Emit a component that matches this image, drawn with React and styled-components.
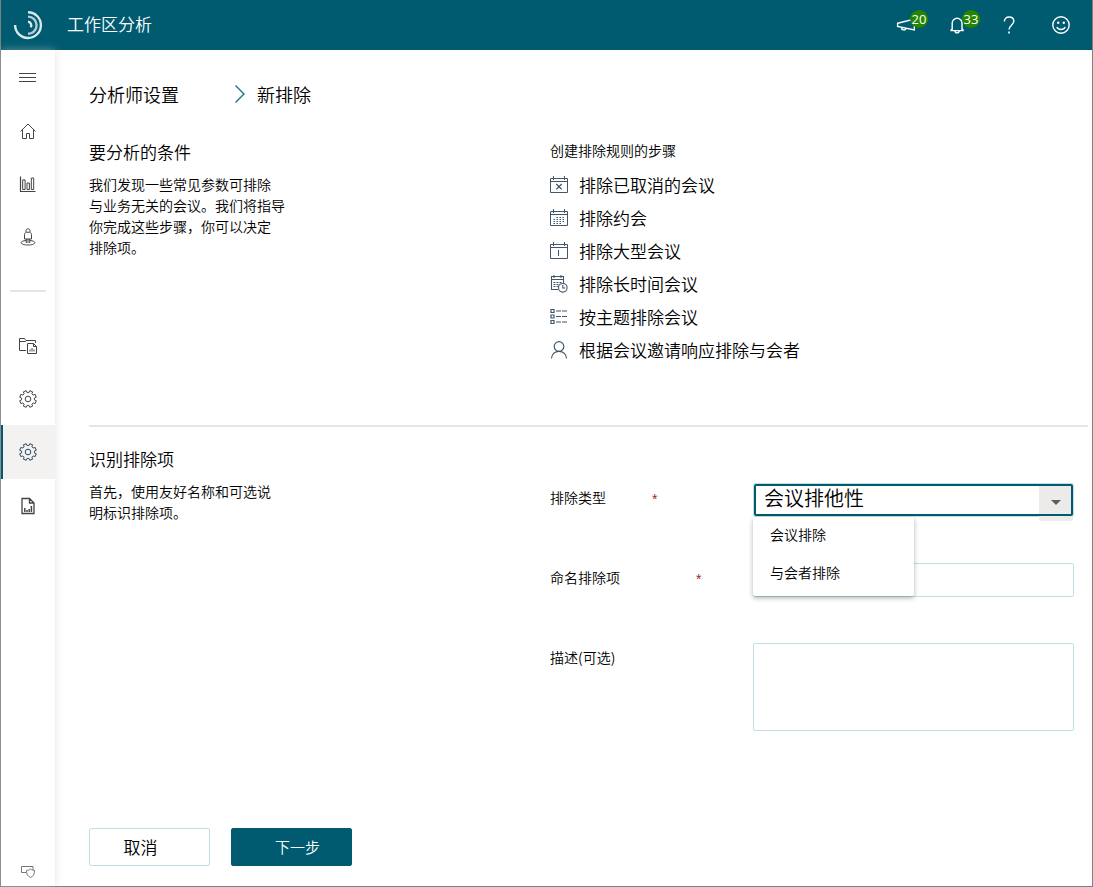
import React from "react";
import styled, { createGlobalStyle } from "styled-components";

const GlobalStyle = createGlobalStyle`
  *, *::before, *::after {
    box-sizing: border-box;
  }

  body {
    margin: 0;
    color: #000;
    background: #fff;
    font-family: "Noto Sans CJK SC", "Noto Sans", sans-serif;
    font-weight: 350;
  }

  button, input, select, textarea {
    font: inherit;
    color: inherit;
  }

  h1, h2, h3, p, ul, ol {
    margin: 0;
    padding: 0;
    font-weight: inherit;
    list-style: none;
  }
`;

const Icon = ({ size = 18, children, ...rest }) => (
  <svg
    width={size}
    height={size}
    viewBox={`0 0 ${size} ${size}`}
    fill="none"
    stroke="currentColor"
    strokeWidth="1"
    aria-hidden="true"
    {...rest}
  >
    {children}
  </svg>
);

const LogoIcon = () => (
  <Icon size={30} strokeWidth="2.4">
    <path d="M15 2.2A12.9 12.9 0 1 1 2.1 15" opacity="0.85" />
    <path d="M15 6.6A8.6 8.6 0 0 1 15 23.8" opacity="0.7" />
    <path d="M15 11.8A3.4 3.4 0 0 1 17.6 17.2" opacity="0.85" />
  </Icon>
);

const MegaphoneIcon = () => (
  <Icon size={20} strokeWidth="1.4">
    <path d="M2.6 8.2L19.4 4v11L2.6 11.4zM6.4 12.4c0 2.8 4 3.6 4.8 1" />
  </Icon>
);

const BellIcon = () => (
  <Icon size={20} strokeWidth="1.4">
    <path d="M3.6 15.6h13M5.2 15.2V8.2a4.9 4.9 0 0 1 9.8 0v7M3.6 15.6l1.6-2M16.6 15.6l-1.6-2M8 15.8a2.1 2.1 0 0 0 4.2 0" />
  </Icon>
);

const HelpIcon = () => (
  <Icon size={20} strokeWidth="1.4">
    <path d="M5.4 6.6C5.4 3.6 7.4 2 10 2s4.8 1.5 4.8 4.3c0 3.6-4.8 4.2-4.8 8.2" />
    <path d="M10 16.6v2" strokeWidth="1.6" />
  </Icon>
);

const SmileIcon = () => (
  <Icon size={20} strokeWidth="1.4">
    <circle cx="10" cy="10" r="8.2" />
    <path d="M5.8 12c1.6 3.4 6.8 3.4 8.4 0" />
    <circle cx="7.2" cy="7.8" r="1.2" fill="currentColor" stroke="none" />
    <circle cx="12.8" cy="7.8" r="1.2" fill="currentColor" stroke="none" />
  </Icon>
);

const MenuIcon = () => (
  <Icon>
    <path d="M0 4.5h17M0 8.5h17M0 12.5h17" />
  </Icon>
);

const HomeIcon = () => (
  <Icon>
    <path d="M1.5 9.4L9 2l7.5 7.4M3.5 8v8.5h4v-5h3v5h4V8" />
  </Icon>
);

const ChartIcon = () => (
  <Icon>
    <path d="M1.5 1.5v15h15" strokeWidth="1.2" />
    <path d="M3.7 4.9h2.4v9.6H3.7zM8 8h2.4v6.5H8zM12.3 3h2.4v11.5h-2.4z" />
  </Icon>
);

const PersonStandIcon = () => (
  <Icon>
    <path d="M7 4V2.6C7 .3 11 .3 11 2.6V4" />
    <path d="M5.5 11V6.5C5.5 5 6.500 4.2 9 4.2s3.500.8 3.500 2.300V11zM7.300 11v4M9 11v4M10.700 11v4" />
    <path d="M7 12.500c-3 .3-4.800 1.100-4.800 2.200 0 1.400 3 2.300 6.800 2.300s6.800-.9 6.800-2.300c0-1.100-1.800-1.900-4.800-2.200" />
  </Icon>
);

const FolderReportIcon = () => (
  <Icon>
    <path d="M7 13.5H.5v-12h5L7 3.5h9.5V6M.5 4.5h6l1-1" />
    <path d="M8.5 6.5h6l3 3v7h-9zM14.5 6.5v3h3M11 12.5v2M13 11v3.500M15 12.500v2" />
  </Icon>
);

// eight toothed cog, drawn as points round the centre
const cogPath = (() => {
  const points = [];
  for (let i = 0; i < 8; i++) {
    const mid = ((i + 0.5) * Math.PI) / 4;
    [
      [-0.25, 6.5],
      [-0.18, 8.5],
      [0.18, 8.5],
      [0.25, 6.5],
    ].forEach(([angle, r]) => {
      const x = 9 + r * Math.cos(mid + angle);
      const y = 9 + r * Math.sin(mid + angle);
      points.push(`${x.toFixed(2)} ${y.toFixed(2)}`);
    });
  }
  return `M${points.join("L")}z`;
})();

const GearIcon = () => (
  <Icon strokeLinejoin="round">
    <path d={cogPath} />
    <circle cx="9" cy="9" r="2.8" />
  </Icon>
);

const ReportIcon = () => (
  <Icon>
    <path d="M3 1.5h7.5L15 6v10.5H3zM10.5 1.5V6H15" strokeWidth="1.3" />
    <path d="M5.8 11v4M8 13v2M10.2 12v3M12.4 9v6" strokeWidth="1.5" />
  </Icon>
);

const PrivacyIcon = () => (
  <Icon>
    <path d="M7 9.5H2.5v-6H14V7" />
    <path d="M11.5 6c1 1 2.2 1.3 4 1.3 0 4-1 5.7-4 7.2-3-1.5-4-3.2-4-7.2 1.8 0 3-.3 4-1.3z" />
  </Icon>
);

const calendarFrame = "M.5 2.5h17v14H.5zM.5 5.5h17M3.5 0v4M14.5 0v4";

const CalendarCancelIcon = () => (
  <Icon>
    <path d={calendarFrame} />
    <path d="M6.3 8l5.4 5.4M11.7 8l-5.4 5.4" strokeWidth="1.3" />
  </Icon>
);

const CalendarIcon = () => (
  <Icon>
    <path d={calendarFrame} />
    <path d="M3.5 12.5H5M6.5 12.5H8M9.5 12.5H11M12.5 12.5H14M3.5 14.5H5M6.5 14.5H8M9.5 14.5H11M6.5 8.5H8M9.5 8.5H11M12.5 8.5H14M3.5 10.5H5M6.5 10.5H8M9.5 10.5H11M12.5 10.5H14" />
  </Icon>
);

const CalendarDayIcon = () => (
  <Icon>
    <path d={calendarFrame} />
    <path d="M8.5 8v6" />
  </Icon>
);

const CalendarClockIcon = () => (
  <Icon strokeWidth="1.1">
    <path d="M8 14.5H1.5v-13h12V8M1.5 4.5h12M4 0v3M11 0v3" />
    <path d="M3.5 7.5h2M6.5 7.5h2M9.5 7.5h2M3.5 9.5h2M6.5 9.5h2M3.5 11.5h2M6.5 11.5H8" />
    <circle cx="12.8" cy="12.8" r="4.3" />
    <path d="M12.8 10v3h2.5" />
  </Icon>
);

const ListIcon = () => (
  <Icon strokeWidth="1.2">
    <path d="M1 1.5h3v3H1zM1 7h3v3H1zM1 12.5h3v3H1z" />
    <path d="M6 3h5M12 3h5M6 8.5h5M12 8.5h5M6 14h5M12 14h5" />
  </Icon>
);

const PersonIcon = () => (
  <Icon strokeWidth="1.2">
    <circle cx="9" cy="5.5" r="4.8" />
    <path d="M1.5 17.5c.3-4.5 3.5-7.2 7.5-7.2s7.2 2.700 7.500 7.200" />
  </Icon>
);

const navItems = [
  { label: "菜单", icon: <MenuIcon /> },
  { label: "主页", icon: <HomeIcon /> },
  { label: "分析", icon: <ChartIcon /> },
  { label: "人员", icon: <PersonStandIcon /> },
  { divider: true },
  { label: "报表文件夹", icon: <FolderReportIcon /> },
  { label: "设置", icon: <GearIcon /> },
  { label: "分析师设置", icon: <GearIcon />, active: true },
  { label: "报表", icon: <ReportIcon /> },
];

const steps = [
  { text: "排除已取消的会议", icon: <CalendarCancelIcon /> },
  { text: "排除约会", icon: <CalendarIcon /> },
  { text: "排除大型会议", icon: <CalendarDayIcon /> },
  { text: "排除长时间会议", icon: <CalendarClockIcon /> },
  { text: "按主题排除会议", icon: <ListIcon /> },
  { text: "根据会议邀请响应排除与会者", icon: <PersonIcon /> },
];

const App = () => {
  return (
    <Page>
      <GlobalStyle />
      <Header>
        <LogoIcon />
        <AppName>工作区分析</AppName>
        <HeaderActions>
          <HeaderButton aria-label="公告">
            <MegaphoneIcon />
            <Badge>20</Badge>
          </HeaderButton>
          <HeaderButton aria-label="通知">
            <BellIcon />
            <Badge>33</Badge>
          </HeaderButton>
          <HeaderButton aria-label="帮助">
            <HelpIcon />
          </HeaderButton>
          <HeaderButton aria-label="反馈">
            <SmileIcon />
          </HeaderButton>
        </HeaderActions>
      </Header>
      <Body>
        <Sidebar>
          {navItems.map((item, index) =>
            item.divider ? (
              <NavDivider key={index} />
            ) : (
              <NavButton key={index} aria-label={item.label} $active={item.active}>
                {item.icon}
              </NavButton>
            )
          )}
          <PrivacyButton aria-label="隐私">
            <PrivacyIcon />
          </PrivacyButton>
        </Sidebar>
        <Main>
          <Breadcrumb>
            <Crumb href="#settings">分析师设置</Crumb>
            <Icon size={20} strokeWidth="1.4" color="#1f6f86">
              <path d="M5.5 1.5L14 10l-8.5 8.5" />
            </Icon>
            <h1>新排除</h1>
          </Breadcrumb>

          <Overview>
            <div>
              <Heading>要分析的条件</Heading>
              <Paragraph>
                我们发现一些常见参数可排除
                <br />
                与业务无关的会议。我们将指导
                <br />
                你完成这些步骤，你可以决定
                <br />
                排除项。
              </Paragraph>
            </div>
            <div>
              <StepsTitle>创建排除规则的步骤</StepsTitle>
              <Steps>
                {steps.map((step) => (
                  <Step key={step.text}>
                    {step.icon}
                    {step.text}
                  </Step>
                ))}
              </Steps>
            </div>
          </Overview>

          <Identify>
            <div>
              <Heading>识别排除项</Heading>
              <Paragraph>
                首先，使用友好名称和可选说
                <br />
                明标识排除项。
              </Paragraph>
            </div>
            <Form>
              <Field>
                <Label htmlFor="type" $gap="46px">
                  排除类型<Required>*</Required>
                </Label>
                <SelectBox>
                  <Arrow>
                    <svg width="10" height="5" viewBox="0 0 10 5">
                      <path d="M0 0h10L5 5z" fill="#605e5c" />
                    </svg>
                  </Arrow>
                  <Select id="type" defaultValue="会议排他性">
                    <option>会议排他性</option>
                  </Select>
                  <Menu role="listbox" aria-label="排除类型">
                    <Option role="option">会议排除</Option>
                    <Option role="option">与会者排除</Option>
                  </Menu>
                </SelectBox>
              </Field>
              <Field>
                <Label htmlFor="name" $gap="76px">
                  命名排除项<Required>*</Required>
                </Label>
                <Input id="name" type="text" />
              </Field>
              <Field>
                <Label htmlFor="description">描述(可选)</Label>
                <TextArea id="description" />
              </Field>
            </Form>
          </Identify>

          <Actions>
            <Button>取消</Button>
            <Button $primary>下一步</Button>
          </Actions>
        </Main>
      </Body>
    </Page>
  );
};

const teal = "#005b70";
const fieldBorder = "#bfdfe5";

const Page = styled.div`
  min-height: 100vh;
  display: flex;
  flex-direction: column;
  border: 1px solid #808080;
  border-top: none;
`;

const Header = styled.header`
  height: 50px;
  display: flex;
  align-items: center;
  padding: 0 15px 0 12px;
  color: white;
  background: ${teal};
`;

const AppName = styled.div`
  margin-left: 24px;
  padding-bottom: 2px;
  font-size: 17px;
  line-height: 22px;
`;

const HeaderActions = styled.div`
  display: flex;
  gap: 20px;
  margin-left: auto;
`;

const HeaderButton = styled.button`
  position: relative;
  width: 32px;
  height: 32px;
  display: flex;
  align-items: center;
  justify-content: center;
  padding: 0;
  border: none;
  background: none;
  color: white;
`;

const Badge = styled.span`
  position: absolute;
  top: 1px;
  left: 21px;
  width: 18px;
  height: 18px;
  border-radius: 50%;
  background: #268500;
  font-family: "Open Sans", sans-serif;
  font-size: 13px;
  font-weight: 400;
  line-height: 18px;
  display: flex;
  justify-content: center;
`;

const Body = styled.div`
  flex: 1;
  display: flex;
`;

const Sidebar = styled.nav`
  width: 54px;
  flex: none;
  display: flex;
  flex-direction: column;
  padding-top: 1px;
  background: white;
  box-shadow: 0 0 8px rgba(200, 200, 200, 0.5);
`;

const NavButton = styled.button`
  height: ${(props) => (props.$active ? "54px" : "53px")};
  display: flex;
  align-items: center;
  justify-content: center;
  padding: 0;
  color: ${(props) => (props.$active ? "#2b4a60" : "#444")};
  border: none;
  background: ${(props) =>
    props.$active ? `linear-gradient(to right, ${teal} 2px, #f3f2f1 2px)` : "none"};
`;

const NavDivider = styled.div`
  height: 2px;
  margin: 27px 9px;
  background: #e5e5e5;
`;

const PrivacyButton = styled(NavButton)`
  height: 28px;
  margin-top: auto;
  color: #777;
`;

const Main = styled.main`
  flex: 1;
  display: flex;
  flex-direction: column;
  padding: 30px 4px 20px 34px;
`;

const Breadcrumb = styled.div`
  display: flex;
  align-items: center;
  font-size: 18px;
  line-height: 28px;

  svg {
    margin: 0 7px 0 51px;
  }

  h1 {
    font-size: 18px;
  }
`;

const Crumb = styled.a`
  color: inherit;
  text-decoration: none;
`;

const Section = styled.section`
  display: grid;
  grid-template-columns: 6fr 7fr;
`;

const Overview = styled(Section)`
  padding: 32px 0 59px;
  border-bottom: 2px solid #e5e5e5;
`;

const Identify = styled(Section)`
  padding: 20px 0 32px;
`;

const Heading = styled.h2`
  font-size: 17px;
  line-height: 24px;
  margin-bottom: 10px;
`;

const Paragraph = styled.p`
  font-size: 14px;
  line-height: 21px;
`;

const StepsTitle = styled.h3`
  font-size: 14px;
  line-height: 20px;
  margin-bottom: 8px;
`;

const Steps = styled.ul`
  display: flex;
  flex-direction: column;
`;

const Step = styled.li`
  display: flex;
  align-items: center;
  gap: 11px;
  font-size: 17px;
  line-height: 33px;

  svg {
    flex: none;
    color: #41566b;
  }
`;

const Form = styled.form`
  padding: 36px 14px 0 0;
`;

const Field = styled.div`
  display: grid;
  grid-template-columns: 203px 1fr;
  align-items: start;
  margin-bottom: 46px;
`;

const Label = styled.label`
  display: flex;
  gap: ${(props) => props.$gap};
  padding-top: 4px;
  font-size: 14px;
  line-height: 21px;
`;

const Required = styled.span`
  color: #a4262c;
  font-family: "Liberation Sans", sans-serif;
  line-height: 24px;
`;

const SelectBox = styled.div`
  position: relative;
  border: 1px solid ${fieldBorder};
  border-radius: 2px;
`;

const Select = styled.select`
  position: relative;
  display: block;
  width: 100%;
  height: 32px;
  padding: 0 40px 6px 8px;
  appearance: none;
  background: transparent;
  border: 2px solid ${teal};
  border-radius: 2px;
  font-size: 20px;
  line-height: 24px;
`;

const Arrow = styled.span`
  position: absolute;
  top: 0;
  right: 0;
  width: 34px;
  height: 37px;
  display: flex;
  align-items: center;
  justify-content: center;
  background: #edebe9;
  border-radius: 2px;
`;

const Menu = styled.ul`
  position: absolute;
  top: 33px;
  left: -1px;
  width: 161px;
  padding-bottom: 3px;
  background: white;
  border-radius: 2px;
  box-shadow: 0 2px 5px rgba(0, 0, 0, 0.3);
  font-size: 14px;
`;

const Option = styled.li`
  padding: 0 17px 3px;
  line-height: 35px;
`;

const Input = styled.input`
  width: 100%;
  height: 34px;
  padding: 0 8px;
  border: 1px solid ${fieldBorder};
  border-radius: 2px;
`;

const TextArea = styled.textarea`
  display: block;
  width: 100%;
  height: 88px;
  padding: 8px;
  border: 1px solid ${fieldBorder};
  border-radius: 2px;
  resize: none;
`;

const Actions = styled.div`
  display: flex;
  gap: 21px;
  margin-top: auto;
`;

const Button = styled.button`
  width: 121px;
  height: 38px;
  padding: ${(props) => (props.$primary ? "0 0 1px 12px" : "0 18px 1px 0")};
  font-size: ${(props) => (props.$primary ? "15px" : "17px")};
  line-height: 24px;
  color: ${(props) => (props.$primary ? "white" : "black")};
  background: ${(props) => (props.$primary ? teal : "white")};
  border: 1px solid ${(props) => (props.$primary ? teal : fieldBorder)};
  border-radius: 2px;
`;

export default App;
